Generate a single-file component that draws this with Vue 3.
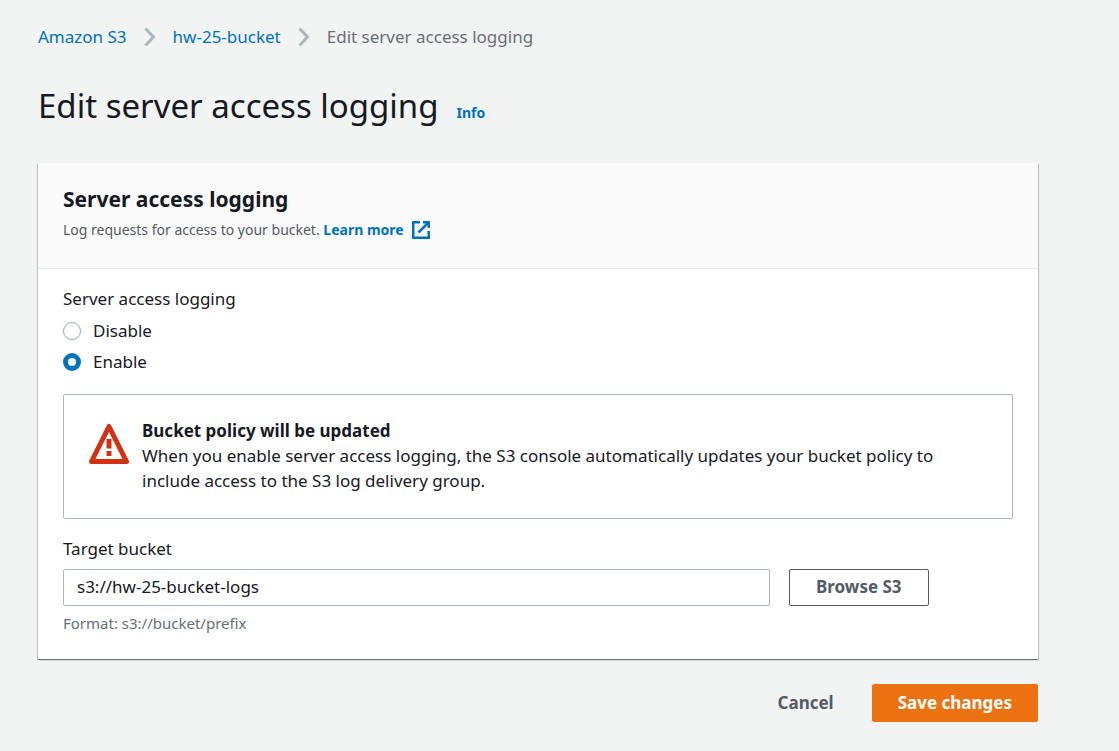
<script setup>
import { ref } from 'vue'

const logging = ref('enable')
const target = ref('s3://hw-25-bucket-logs')
const options = [
  { value: 'disable', label: 'Disable' },
  { value: 'enable', label: 'Enable' },
]
const crumbs = [
  { label: 'Amazon S3', link: true },
  { label: 'hw-25-bucket', link: true },
  { label: 'Edit server access logging', link: false },
]
</script>

<template>
  <main class="page">
    <nav aria-label="Breadcrumbs">
      <ol class="crumbs">
        <li v-for="(crumb, i) in crumbs" :key="crumb.label">
          <svg v-if="i > 0" class="chevron" width="12" height="20" viewBox="0 0 12 20" aria-hidden="true">
            <path d="M1.5 1.5 9.5 10l-8 8.5" />
          </svg>
          <a v-if="crumb.link" href="#">{{ crumb.label }}</a>
          <span v-else aria-current="page">{{ crumb.label }}</span>
        </li>
      </ol>
    </nav>

    <header class="title">
      <h1>Edit server access logging</h1>
      <a href="#" class="info">Info</a>
    </header>

    <form @submit.prevent>
      <section class="card">
        <header class="card-head">
          <h2>Server access logging</h2>
          <p>
            Log requests for access to your bucket.
            <a href="#" class="learn">Learn more<svg width="18" height="18" viewBox="0 0 18 18" aria-hidden="true">
              <path d="M8 1.25H1.25v15.5h15.5V10M11 1.25h5.75V7M16.5 1.5 6.5 11.5" />
            </svg></a>
          </p>
        </header>

        <div class="card-body">
          <fieldset>
            <legend>Server access logging</legend>
            <div class="radios">
              <label v-for="option in options" :key="option.value" class="radio">
                <input v-model="logging" type="radio" name="logging" :value="option.value" />
                {{ option.label }}
              </label>
            </div>
          </fieldset>

          <div class="notice" role="note">
            <svg width="40" height="40" viewBox="0 0 40 40" aria-hidden="true">
              <path class="triangle" d="M20 2.5 37.5 37.5h-35z" />
              <path class="mark" d="M17.500 15h5v9.500h-5zM17.500 27h5v5h-5z" />
            </svg>
            <div>
              <strong>Bucket policy will be updated</strong>
              <p>When you enable server access logging, the S3 console automatically updates your bucket policy to include access to the S3 log delivery group.</p>
            </div>
          </div>

          <label class="field-label" for="target">Target bucket</label>
          <div class="field-row">
            <input id="target" v-model="target" type="text" aria-describedby="hint" />
            <button type="button" class="browse">Browse S3</button>
          </div>
          <p id="hint" class="hint">Format: s3://bucket/prefix</p>
        </div>
      </section>

      <footer class="actions">
        <button type="button" class="cancel">Cancel</button>
        <button type="submit" class="save">Save changes</button>
      </footer>
    </form>
  </main>
</template>

<style>
body {
  margin: 0;
  background: #f2f3f3;
}
</style>

<style scoped>
.page {
  box-sizing: border-box;
  padding: 24px 81px 29px 38px;
  font-family: "Noto Sans", "Open Sans", sans-serif;
  font-size: 17px;
  line-height: 25px;
  color: #16191f;
}

h1,
h2,
p,
ol {
  margin: 0;
  padding: 0;
}

a {
  color: #0073bb;
  text-decoration: none;
}

.crumbs,
.crumbs li {
  display: flex;
  align-items: center;
  list-style: none;
}

.crumbs {
  color: #687078;
}

.chevron {
  margin: 0 17px;
  fill: none;
  stroke: #aab7b8;
  stroke-width: 3;
}

.title {
  display: flex;
  align-items: baseline;
  gap: 18px;
  margin: 34px 0;
}

h1 {
  font-size: 33px;
  font-weight: 400;
  line-height: 46px;
}

.info {
  font-size: 14px;
  font-weight: 700;
}

.card {
  background: #fff;
  box-shadow: 0 1px 1px 0 rgba(0, 28, 36, 0.4), 1px 1px 1px 0 rgba(0, 28, 36, 0.15), -1px 1px 1px 0 rgba(0, 28, 36, 0.15);
}

.card-head {
  padding: 22px 25px 26px;
  background: #fafafa;
  border-bottom: 1px solid #eaeded;
}

h2 {
  font-size: 21px;
  font-weight: 700;
  line-height: 28px;
}

.card-head p {
  padding-top: 4px;
  font-size: 14px;
  color: #545b64;
}

.learn {
  font-weight: 700;
}

.learn svg {
  margin-left: 8px;
  vertical-align: -4px;
  fill: none;
  stroke: #0073bb;
  stroke-width: 2.5;
}

.card-body {
  padding: 17px 25px 23px;
}

fieldset {
  margin: 0;
  padding: 0;
  border: 0;
}

legend {
  padding: 0;
}

.radios {
  display: grid;
  gap: 6px;
  padding-top: 7px;
}

.radio {
  display: flex;
  align-items: center;
  gap: 12px;
}

.radio input {
  appearance: none;
  box-sizing: border-box;
  width: 18px;
  height: 18px;
  margin: 0;
  background: #fff;
  border: 1px solid #95a5a6;
  border-radius: 50%;
}

.radio input:checked {
  border: 5px solid #0073bb;
}

.notice {
  display: flex;
  gap: 13px;
  margin: 20px 0 17px;
  padding: 23px 24px 25px;
  border: 1px solid #aab7b8;
  border-radius: 2px;
}

.notice svg {
  flex: none;
  margin: 6px 0 0 1px;
}

.triangle {
  fill: none;
  stroke: #d13212;
  stroke-width: 5;
  stroke-linejoin: round;
}

.mark {
  fill: #d13212;
}

.field-label {
  display: block;
}

.field-row {
  display: grid;
  grid-template-columns: 707fr 224fr;
  column-gap: 19px;
  justify-items: start;
  margin-top: 8px;
}

.field-row input,
button {
  box-sizing: border-box;
  font-family: inherit;
  font-size: 17px;
  line-height: 25px;
  border-radius: 2px;
}

.field-row input {
  width: 100%;
  height: 37px;
  padding: 4px 13px 6px;
  color: #16191f;
  background: #fff;
  border: 1px solid #aab7b8;
}

button {
  padding: 4px 25px 6px;
  font-weight: 700;
  color: #545b64;
  background: #fff;
  border: 1px solid #545b64;
}

.browse {
  padding: 4px 26px 6px;
}

.hint {
  margin-top: 5px;
  font-size: 15px;
  color: #687078;
}

.actions {
  display: flex;
  justify-content: flex-end;
  gap: 12px;
  margin-top: 25px;
}

.actions button {
  height: 38px;
}

.cancel {
  background: transparent;
  border-color: transparent;
}

.save {
  color: #fff;
  background: #ec7211;
  border-color: #ec7211;
}
</style>
